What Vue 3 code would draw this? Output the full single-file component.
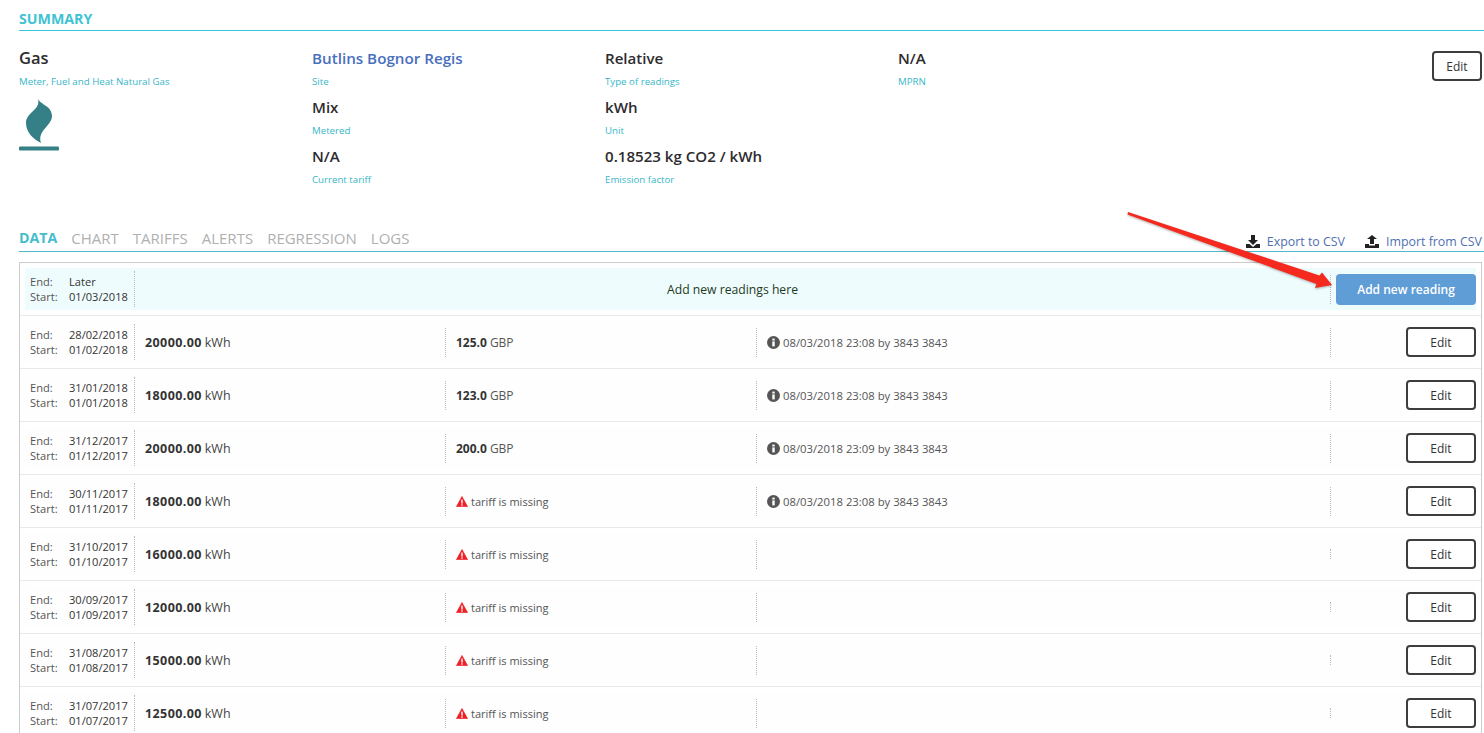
<script setup>
const info = [
  [{ v: 'Butlins Bognor Regis', l: 'Site', link: true }, { v: 'Mix', l: 'Metered' }, { v: 'N/A', l: 'Current tariff' }],
  [{ v: 'Relative', l: 'Type of readings' }, { v: 'kWh', l: 'Unit' }, { v: '0.18523 kg CO2 / kWh', l: 'Emission factor' }],
  [{ v: 'N/A', l: 'MPRN' }]
]
const tabs = ['DATA', 'CHART', 'TARIFFS', 'ALERTS', 'REGRESSION', 'LOGS']
const rows = [
  { end: '28/02/2018', start: '01/02/2018', val: '20000.00', cost: '125.0', log: '08/03/2018 23:08 by 3843 3843' },
  { end: '31/01/2018', start: '01/01/2018', val: '18000.00', cost: '123.0', log: '08/03/2018 23:08 by 3843 3843' },
  { end: '31/12/2017', start: '01/12/2017', val: '20000.00', cost: '200.0', log: '08/03/2018 23:09 by 3843 3843' },
  { end: '30/11/2017', start: '01/11/2017', val: '18000.00', log: '08/03/2018 23:08 by 3843 3843' },
  { end: '31/10/2017', start: '01/10/2017', val: '16000.00' },
  { end: '30/09/2017', start: '01/09/2017', val: '12000.00' },
  { end: '31/08/2017', start: '01/08/2017', val: '15000.00' },
  { end: '31/07/2017', start: '01/07/2017', val: '12500.00' }
]
</script>

<template>
  <div class="page">
    <h2 class="title">SUMMARY</h2>
    <section class="summary">
      <div class="col">
        <div class="item">
          <div class="value gas">Gas</div>
          <div class="label">Meter, Fuel and Heat Natural Gas</div>
        </div>
        <svg class="flame" width="40" height="52" viewBox="19 99 40 52">
          <path d="M38 99C41 105 52 106 52 116C52 126 37 130 41 143C33 139 26 132 26 123C26 112 41 110 38 99Z" fill="#357f86" />
          <rect x="19" y="146.500" width="40" height="4" rx="1" fill="#357f86" />
        </svg>
      </div>
      <div v-for="(col, i) in info" :key="i" class="col">
        <div v-for="it in col" :key="it.l" class="item">
          <div class="value" :class="{ link: it.link }">{{ it.v }}</div>
          <div class="label">{{ it.l }}</div>
        </div>
      </div>
      <button class="edit top-edit">Edit</button>
    </section>

    <nav class="tabs">
      <span v-for="(t, i) in tabs" :key="t" class="tab" :class="{ active: i === 0 }">{{ t }}</span>
      <span class="actions">
        <a class="action">
          <svg width="14" height="13" viewBox="0 0 14 13"><path d="M5 0h4v5h3L7 10 2 5h3zM0 9h3.500L7 12l3.500-3H14v4H0z" fill="#222" /></svg>
          Export to CSV
        </a>
        <a class="action">
          <svg width="14" height="13" viewBox="0 0 14 13"><path d="M5 9V4H2l5-4 5 4H9v5zM0 9h4v1.500h6V9h4v4H0z" fill="#222" /></svg>
          Import from CSV
        </a>
      </span>
    </nav>

    <section class="table">
      <div class="row first">
        <div class="inner">
          <div class="dates">
            <div class="d"><span>End:</span><span>Later</span></div>
            <div class="d"><span>Start:</span><span>01/03/2018</span></div>
          </div>
          <div class="hint">Add new readings here</div>
          <div class="last-cell">
            <button class="add">Add new reading</button>
          </div>
        </div>
      </div>
      <div v-for="r in rows" :key="r.end" class="row">
        <div class="inner">
          <div class="dates">
            <div class="d"><span>End:</span><span>{{ r.end }}</span></div>
            <div class="d"><span>Start:</span><span>{{ r.start }}</span></div>
          </div>
          <div class="cell c-val"><b>{{ r.val }}</b> kWh</div>
          <div class="cell c-cost">
            <template v-if="r.cost"><b>{{ r.cost }}</b> GBP</template>
            <span v-else class="warn">
              <svg width="12" height="11" viewBox="0 0 12 11"><path d="M6 0.300L11.800 10.800H0.200Z" fill="#ee2026" stroke="#ee2026" stroke-linejoin="round" stroke-width="0.400" /><rect x="5.300" y="3.600" width="1.400" height="4" fill="#fff" /><rect x="5.300" y="8.300" width="1.400" height="1.400" fill="#fff" /></svg>
              tariff is missing
            </span>
          </div>
          <div class="c-log">
            <span v-if="r.log" class="log">
              <svg width="13" height="13" viewBox="0 0 13 13"><circle cx="6.500" cy="6.500" r="6.500" fill="#555" /><rect x="5.300" y="5.400" width="2.400" height="5" fill="#fff" /><rect x="5.300" y="2.600" width="2.400" height="1.900" fill="#fff" /></svg>
              {{ r.log }}
            </span>
          </div>
          <div class="sep" :class="{ short: !r.log }"></div>
          <div class="last-cell"><button class="edit">Edit</button></div>
        </div>
      </div>
    </section>

    <svg class="arrow" width="220" height="90" viewBox="1120 205 220 90">
      <path d="M1128 212L1127.500 214.500L1316.500 284L1315 288L1332 285L1322 272.500L1319.500 275.500Z" fill="#f5291e" />
    </svg>
  </div>
</template>

<style>
html, body { margin: 0; background: #fff; overflow: hidden; }
</style>

<style scoped>
.page {
  position: relative;
  height: 733px;
  overflow: hidden;
  padding-left: 19px;
  box-sizing: border-box;
  font-family: "Open Sans", "Noto Sans", sans-serif;
  color: #333;
  background: #fff;
}
.title {
  margin: 0;
  height: 31px;
  box-sizing: border-box;
  padding-top: 10px;
  border-bottom: 1px solid #35c8d6;
  font-size: 14.200px;
  line-height: 18px;
  font-weight: 700;
  color: #40c3d3;
}
.summary {
  display: grid;
  grid-template-columns: 293px 293px 293px 1fr;
  height: 190px;
  padding-top: 16px;
  box-sizing: border-box;
  position: relative;
}
.item { height: 49px; }
.value {
  font-size: 15.100px;
  line-height: 22px;
  font-weight: 600;
  color: #2e2c2f;
}
.value.gas { font-size: 16.500px; }
.value.link { color: #4a6fbc; font-size: 15.200px; }
.label {
  margin-top: 6px;
  font-size: 9.700px;
  line-height: 13px;
  color: #38b6c8;
}
.flame { display: block; margin-top: 3px; }
.edit {
  width: 70px;
  height: 30px;
  border: 2px solid #3d3d3d;
  border-radius: 4px;
  background: #fff;
  font: 12px "Open Sans", sans-serif;
  color: #333;
  padding: 0;
}
.top-edit {
  position: absolute;
  right: 2px;
  top: 20px;
  width: 50px;
}
.tabs {
  display: flex;
  align-items: center;
  gap: 14px;
  height: 31px;
  box-sizing: border-box;
  padding-top: 3px;
  border-bottom: 1px solid #4db8c6;
  font-size: 15px;
  color: #b0b0b0;
}
.tab { font-weight: 400; line-height: 18px; }
.tab.active { color: #45bdcd; font-weight: 700; font-size: 14.200px; }
.actions {
  margin-left: auto;
  display: flex;
  gap: 20px;
  padding-right: 2px;
  padding-top: 8px;
}
.action {
  display: flex;
  align-items: center;
  gap: 7px;
  font-size: 12.400px;
  color: #4f6fb0;
}
.table {
  margin-top: 10px;
  margin-right: 2px;
  border: 1px solid #ccc;
  border-bottom: 0;
}
.row {
  padding: 5px;
  height: 53px;
  box-sizing: border-box;
  border-bottom: 1px solid #e9e9e9;
}
.inner {
  display: flex;
  align-items: center;
  height: 42px;
  background: #fefefe;
  font-size: 12px;
}
.first .inner { background: #effcfd; }
.dates {
  width: 110px;
  box-sizing: border-box;
  padding-left: 5px;
  font-size: 11.100px;
  line-height: 15px;
  color: #333;
  border-right: 1px dotted #bbb;
  height: 36px;
  display: flex;
  flex-direction: column;
  justify-content: center;
}
.d { display: flex; }
.d span:first-child { width: 39px; color: #555; }
.hint {
  flex: 1;
  text-align: center;
  font-size: 12.200px;
  color: #1d3a1d;
}
.cell {
  box-sizing: border-box;
  height: 29px;
  display: flex;
  align-items: center;
  gap: 3px;
  border-right: 1px dotted #bbb;
  padding-left: 10px;
  white-space: nowrap;
}
.c-val { width: 311px; font-size: 12.500px; color: #444; }
.c-cost { width: 311px; color: #555; }
.c-log {
  width: 573px;
  height: 29px;
  display: flex;
  align-items: center;
  box-sizing: border-box;
  padding-left: 10px;
  white-space: nowrap;
  color: #555;
}
.sep { width: 0; height: 29px; border-right: 1px dotted #bbb; }
.sep.short { height: 10px; }
.cell b { color: #333; font-weight: 700; }
.c-val b { letter-spacing: 0.400px; }
.warn { display: inline-flex; align-items: center; gap: 3px; font-size: 11px; color: #555; }
.log { display: inline-flex; align-items: center; gap: 3px; font-size: 11.300px; color: #555; }
.last-cell {
  flex: 1;
  display: flex;
  justify-content: flex-end;
}
.first .last-cell {
  flex: none;
  width: 146px;
  box-sizing: border-box;
  height: 29px;
  align-items: center;
  border-left: 1px dotted #bbb;
}
.add {
  width: 140px;
  height: 31px;
  flex: none;
  border: 0;
  border-radius: 4px;
  background: #5f9dd6;
  color: #fff;
  font: 600 12px "Open Sans", sans-serif;
  padding: 0;
}
.arrow {
  position: absolute;
  left: 1120px;
  top: 205px;
  filter: drop-shadow(0 1px 1px rgba(0, 0, 0, 0.3));
}
</style>
